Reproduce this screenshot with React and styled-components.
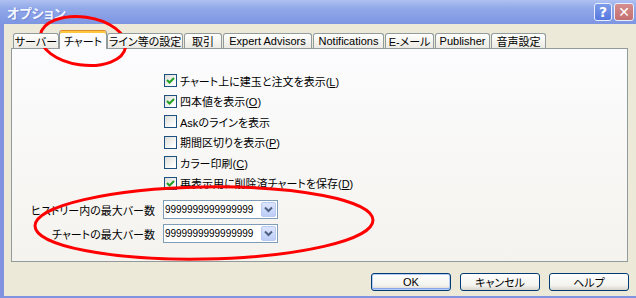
import { Fragment } from 'react'
import styled, { createGlobalStyle } from 'styled-components'

/** global */
const GlobalStyle = createGlobalStyle`
  html, body {
    margin: 0;
    padding: 0;
    overflow: hidden;
    background: #ECE9D8;
  }
  body {
    font-family: "Liberation Sans", "Noto Sans CJK JP", sans-serif;
    font-size: 11px;
    font-feature-settings: "palt";
    color: #000;
  }
`

/** data */
const tabs = [
  { label: 'サーバー', width: 46 },
  { label: 'チャート', width: 48, active: true },
  { label: 'ライン等の設定', width: 76 },
  { label: '取引', width: 38 },
  { label: 'Expert Advisors', width: 89 },
  { label: 'Notifications', width: 71 },
  { label: 'E-メール', width: 49 },
  { label: 'Publisher', width: 55 },
  { label: '音声設定', width: 55 },
]

const options = [
  { text: 'チャート上に建玉と注文を表示', key: 'L', checked: true },
  { text: '四本値を表示', key: 'O', checked: true },
  { text: 'Askのラインを表示', checked: false },
  { text: '期間区切りを表示', key: 'P', checked: false },
  { text: 'カラー印刷', key: 'C', checked: false },
  { text: '再表示用に削除済チャートを保存', key: 'D', checked: true },
]

const limits = [
  { label: 'ヒストリー内の最大バー数', value: '9999999999999999' },
  { label: 'チャートの最大バー数', value: '9999999999999999' },
]

/** styled */
const Window = styled.div`
  position: relative;
  width: 636px;
  height: 298px;
  display: flex;
  flex-direction: column;
`

const TitleBar = styled.div`
  height: 24px;
  flex: none;
  display: flex;
  align-items: center;
  padding: 0 2px 0 7px;
  background: linear-gradient(#AFC1F1, #91A8E9 35%, #839BE4 80%, #7E96E2);
`

const Title = styled.span`
  flex: 1;
  color: #F4F7FE;
  font-size: 13px;
  font-weight: bold;
  text-shadow: 1px 1px 0 #7088D6;
`

const TitleButton = styled.div`
  width: ${p => (p.$close ? '20px' : '18px')};
  height: 18px;
  margin-left: 2px;
  box-sizing: border-box;
  border: 1px solid #E8EEFC;
  border-radius: 3px;
  display: flex;
  align-items: center;
  justify-content: center;
  color: #fff;
  font-family: "DejaVu Sans", sans-serif;
  font-weight: bold;
  font-size: 14px;
  background: ${p => (p.$close ? 'linear-gradient(#D58D8D, #C46F6F)' : 'linear-gradient(#7D9CEA, #5678DE)')};
`

const Body = styled.div`
  flex: 1;
  display: flex;
  flex-direction: column;
  border-left: 4px solid #7F93E0;
  border-bottom: 2px solid #7F93E0;
  padding: 6px 0 0 7px;
`

const TabStrip = styled.div`
  position: relative;
  z-index: 1;
  height: 19px;
  margin: 0 0 -1px 2px;
  display: flex;
  align-items: flex-end;
  gap: 1px;
`

const Tab = styled.div`
  box-sizing: border-box;
  width: ${p => p.$width}px;
  height: ${p => (p.$active ? 19 : 15)}px;
  margin-bottom: ${p => (p.$active ? 0 : 1)}px;
  margin-left: ${p => (p.$active ? -1 : 0)}px;
  margin-right: ${p => (p.$active ? -1 : 0)}px;
  border: 1px solid #919B9C;
  border-bottom: none;
  border-top-color: ${p => (p.$active ? '#E68B2C' : '#919B9C')};
  border-radius: 3px 3px 0 0;
  display: flex;
  align-items: center;
  justify-content: center;
  white-space: nowrap;
  padding-top: ${p => (p.$active ? 1 : 0)}px;
  background: ${p => (p.$active ? '#FCFCFE' : 'linear-gradient(#FFFFFF, #F3F2ED 60%, #EAE9E3)')};
  box-shadow: ${p => (p.$active ? 'inset 0 2px #FFC73C' : 'none')};
`

const Panel = styled.div`
  box-sizing: border-box;
  width: 617px;
  height: 214px;
  border: 1px solid #919B9C;
  background: linear-gradient(#FCFCFE, #F4F3EE);
  display: flex;
  flex-direction: column;
`

const CheckList = styled.div`
  margin-top: 21.5px;
  padding-left: 152px;
  display: flex;
  flex-direction: column;
`

const CheckRow = styled.label`
  height: 20.5px;
  display: flex;
  align-items: center;
  gap: 3px;
  white-space: nowrap;
`

const Box = styled.span`
  box-sizing: border-box;
  width: 13px;
  height: 13px;
  border: 1px solid #1C5180;
  background: linear-gradient(135deg, #DCDCD7, #FFFFFF 85%);
  display: flex;
  align-items: center;
  justify-content: center;
`

const LimitGrid = styled.div`
  margin-top: 6.5px;
  display: grid;
  grid-template-columns: 143px 115px;
  grid-auto-rows: 19px;
  column-gap: 8px;
  row-gap: 5px;
`

const LimitLabel = styled.span`
  display: flex;
  align-items: center;
  justify-content: flex-end;
  white-space: nowrap;
`

const Combo = styled.div`
  box-sizing: border-box;
  border: 1px solid #7F9DB9;
  background: #fff;
  display: flex;
  align-items: center;
  padding: 0 1px 0 1px;
`

const ComboValue = styled.span`
  flex: 1;
  font-size: 10px;
  letter-spacing: -0.05px;
  white-space: nowrap;
  overflow: hidden;
`

const DropButton = styled.span`
  flex: none;
  box-sizing: border-box;
  width: 15px;
  height: 15px;
  border: 1px solid #B9CAF2;
  border-radius: 2px;
  background: linear-gradient(#DCE5FC, #BCCDF7);
  display: flex;
  align-items: center;
  justify-content: center;
`

const ButtonRow = styled.div`
  width: 618px;
  margin-top: 11px;
  display: flex;
  justify-content: flex-end;
  gap: 9px;
`

const Button = styled.div`
  box-sizing: border-box;
  width: 80px;
  height: 18px;
  border: 1px solid #003C74;
  border-radius: 3px;
  background: linear-gradient(#FFFFFF, #F3F3EF 70%, #D9D5CB);
  box-shadow: ${p => (p.$default ? 'inset 0 0 0 1px #B5CDF5, inset 0 -1px 0 1px #8AA6EA' : 'none')};
  display: flex;
  align-items: center;
  justify-content: center;
`

const Annotation = styled.svg`
  position: absolute;
  left: 0;
  top: 0;
  pointer-events: none;
`

/** parts */
const Check = () => (
  <svg width="9" height="9" viewBox="0 0 9 9">
    <path d="M1 4 L3.5 6.5 L8 2" fill="none" stroke="#21A121" strokeWidth="2" />
  </svg>
)

const Chevron = () => (
  <svg width="9" height="7" viewBox="0 0 9 7">
    <path d="M1 1.5 L4.5 5 L8 1.5" fill="none" stroke="#4D6185" strokeWidth="2" />
  </svg>
)

export default function App() {
  return (
    <Window>
      <GlobalStyle />
      <TitleBar>
        <Title>オプション</Title>
        <TitleButton>?</TitleButton>
        <TitleButton $close>✕</TitleButton>
      </TitleBar>
      <Body>
        <TabStrip>
          {tabs.map(t => (
            <Tab key={t.label} $width={t.width} $active={t.active}>{t.label}</Tab>
          ))}
        </TabStrip>
        <Panel>
          <CheckList>
            {options.map(o => (
              <CheckRow key={o.text}>
                <Box>{o.checked && <Check />}</Box>
                <span>
                  {o.text}
                  {o.key && <>(<u>{o.key}</u>)</>}
                </span>
              </CheckRow>
            ))}
          </CheckList>
          <LimitGrid>
            {limits.map(l => (
              <Fragment key={l.label}>
                <LimitLabel>{l.label}</LimitLabel>
                <Combo>
                  <ComboValue>{l.value}</ComboValue>
                  <DropButton><Chevron /></DropButton>
                </Combo>
              </Fragment>
            ))}
          </LimitGrid>
        </Panel>
        <ButtonRow>
          <Button $default>OK</Button>
          <Button>キャンセル</Button>
          <Button>ヘルプ</Button>
        </ButtonRow>
      </Body>
      <Annotation width="636" height="298">
        <ellipse cx="83" cy="41" rx="43" ry="24" transform="rotate(8 83 41)" fill="none" stroke="#FF0000" strokeWidth="3" />
        <ellipse cx="204" cy="223" rx="169" ry="36" transform="rotate(-1 204 223)" fill="none" stroke="#FF0000" strokeWidth="3" />
      </Annotation>
    </Window>
  )
}
